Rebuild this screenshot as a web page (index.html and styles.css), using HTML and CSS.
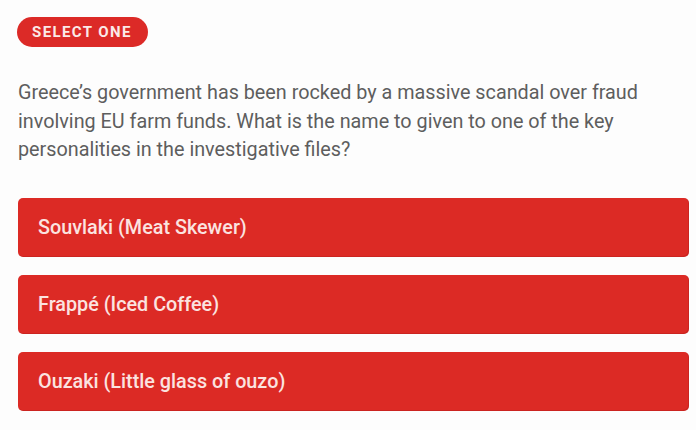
FILE: index.html
```html
<!DOCTYPE html>
<html lang="en">
<head>
<meta charset="utf-8">
<link rel="stylesheet" href="styles.css">
</head>
<body>
<main class="quiz">
  <span class="badge">SELECT ONE</span>
  <p class="question">Greece’s government has been rocked by a massive scandal over fraud involving EU farm funds. What is the name to given to one of the key personalities in the investigative files?</p>
  <div class="options">
    <button class="option">Souvlaki (Meat Skewer)</button>
    <button class="option">Frappé (Iced Coffee)</button>
    <button class="option">Ouzaki (Little glass of ouzo)</button>
  </div>
</main>
</body>
</html>
```
FILE: styles.css
```css
html, body {
  margin: 0;
  background: #fdfdfd;
}
body {
  font-family: Roboto, "Liberation Sans", sans-serif;
}
.quiz {
  padding: 17px 7px 0 18px;
  display: flex;
  flex-direction: column;
  align-items: flex-start;
}
.badge {
  display: inline-flex;
  align-items: center;
  height: 30px;
  box-sizing: border-box;
  padding: 0 16px 0 15px;
  margin-left: -1px;
  border-radius: 15px;
  background: #dc2a27;
  color: #fbe9e8;
  font-weight: 700;
  font-size: 15px;
  letter-spacing: 1.4px;
}
.question {
  margin: 32px 0 0;
  font-size: 19.8px;
  line-height: 28.5px;
  color: #5e5e5e;
  max-width: 650px;
}
.options {
  margin-top: 33.5px;
  align-self: stretch;
  display: flex;
  flex-direction: column;
  gap: 18px;
}
.option {
  height: 59px;
  border: none;
  border-radius: 5px;
  background: #dc2a25;
  box-shadow: inset -1px -1px 0 rgba(150, 20, 20, 0.25);
  color: #fbe3e0;
  font-family: inherit;
  font-size: 19.8px;
  font-weight: 500;
  text-align: left;
  padding: 0 20px;
}
```
